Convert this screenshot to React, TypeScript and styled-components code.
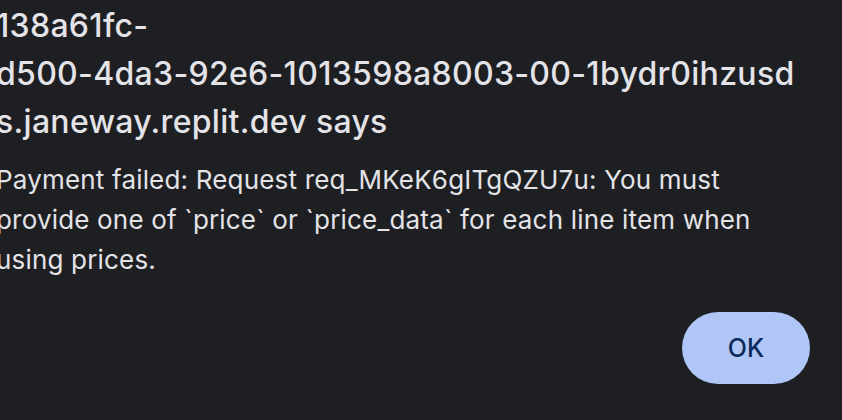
import React from "react";
import styled, { createGlobalStyle } from "styled-components";

const GlobalStyle = createGlobalStyle`
  html, body {
    margin: 0;
    padding: 0;
    background: #1e1f22;
    overflow: hidden;
  }
  * { box-sizing: border-box; }
`;

const Dialog = styled.div`
  width: 846px;
  height: 420px;
  display: flex;
  flex-direction: column;
  padding: 2px 32px 36px 0;
  margin-left: -4px;
  background: #1e1f22;
  font-family: Inter, "Liberation Sans", sans-serif;
  color: #e3e3e8;
`;

const Title = styled.h1`
  margin: 0;
  font-size: 32px;
  line-height: 48px;
  font-weight: 500;
  letter-spacing: 0.3px;
`;

const Line = styled.span`
  display: block;
  white-space: nowrap;
`;

const Message = styled.p`
  margin: 14px 0 0;
  font-size: 26px;
  line-height: 40px;
  font-weight: 400;
  letter-spacing: 0.18px;
`;

const Footer = styled.div`
  margin-top: auto;
  display: flex;
  justify-content: flex-end;
`;

const OkButton = styled.button`
  width: 128px;
  height: 72px;
  border: none;
  border-radius: 36px;
  background: #b0c6f6;
  color: #0b2a5c;
  font-family: Inter, "Liberation Sans", sans-serif;
  font-size: 25px;
  font-weight: 500;
  cursor: pointer;
`;

export default function App() {
  return (
    <>
      <GlobalStyle />
      <Dialog role="alertdialog">
        <Title>
          <Line>138a61fc-</Line>
          <Line>d500-4da3-92e6-1013598a8003-00-1bydr0ihzusd</Line>
          <Line>s.janeway.replit.dev says</Line>
        </Title>
        <Message>
          <Line>Payment failed: Request req_MKeK6gITgQZU7u: You must</Line>
          <Line>provide one of `price` or `price_data` for each line item when</Line>
          <Line>using prices.</Line>
        </Message>
        <Footer>
          <OkButton>OK</OkButton>
        </Footer>
      </Dialog>
    </>
  );
}
